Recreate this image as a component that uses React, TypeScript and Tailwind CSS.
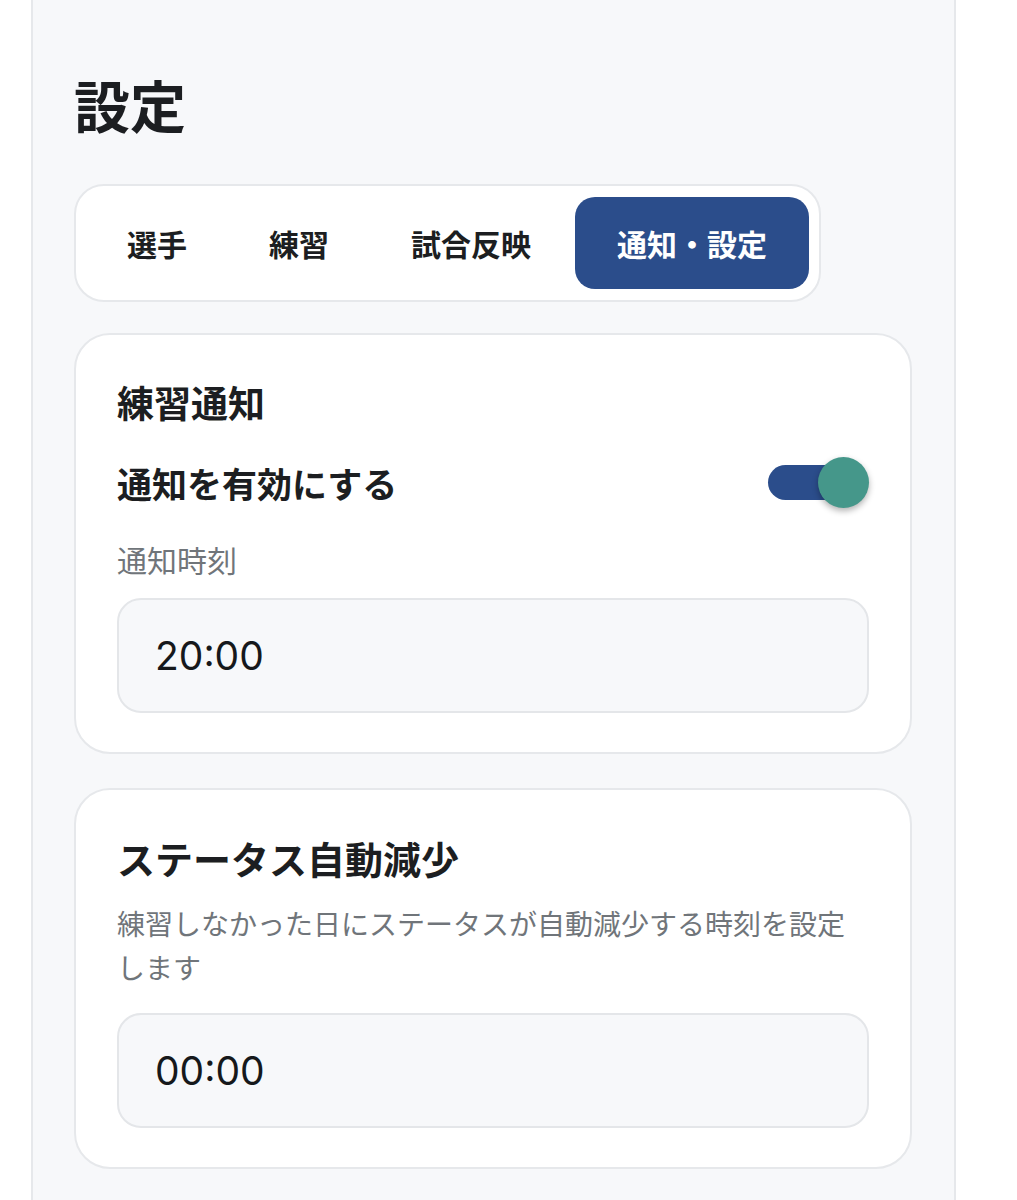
import React from "react";

const jp = "font-['Noto_Sans_CJK_JP','Noto_Sans',sans-serif]";

const tabs = ["選手", "練習", "試合反映", "通知・設定"];

const TimeField = ({ value }: { value: string }) => (
  <input
    readOnly
    value={value}
    className="block h-[115px] w-full rounded-[24px] border-2 border-[#e4e6e9] bg-[#f7f8fa] pl-[36px] font-['Inter',sans-serif] text-[39px] text-[#16181b] outline-none"
  />
);

const Toggle = () => (
  <div className="relative h-[51px] w-[101px]">
    <div className="absolute left-0 top-[8px] h-[35px] w-[76px] rounded-full bg-[#2b4d8b]" />
    <div className="absolute right-0 top-0 h-[51px] w-[51px] rounded-full bg-[#45978a] shadow-[0_3px_6px_rgba(0,0,0,0.3)]" />
  </div>
);

export default function App() {
  const active = "通知・設定";

  return (
    <div className={`min-h-[1200px] bg-white ${jp}`}>
      <div className="ml-[31px] min-h-[1200px] w-[925px] border-x-2 border-[#e6e8eb] bg-[#f7f8fa] pl-[41px] pr-[42px] pt-[70px]">
        <h1 className="text-[56px] font-bold leading-[68px] text-[#1c1e21]">設定</h1>

        <div className="mt-[46px] inline-flex rounded-[30px] border-2 border-[#e6e8eb] bg-white px-[10px] py-[11px]">
          {tabs.map((t) => (
            <div
              key={t}
              className={
                t === active
                  ? "ml-[3px] rounded-[20px] bg-[#2b4d8b] px-[42px] py-[26px] text-[30px] font-bold leading-[40px] text-white"
                  : "rounded-[20px] px-[41px] py-[26px] text-[30px] font-bold leading-[40px] text-[#1c1e21]"
              }
            >
              {t}
            </div>
          ))}
        </div>

        <div className="mt-[31px] w-[838px] rounded-[36px] border-2 border-[#e6e8eb] bg-white px-[41px] pb-[39px] pt-[43px]">
          <h2 className="text-[37px] font-bold leading-[48px] text-[#1c1e21]">練習通知</h2>
          <div className="mt-[31px] flex items-center justify-between">
            <span className="text-[35px] font-bold leading-[48px] text-[#1c1e21]">通知を有効にする</span>
            <Toggle />
          </div>
          <div className="mt-[31px] text-[30px] leading-[40px] text-[#70757a]">通知時刻</div>
          <div className="mt-[19px]">
            <TimeField value="20:00" />
          </div>
        </div>

        <div className="mt-[34px] w-[838px] rounded-[36px] border-2 border-[#e6e8eb] bg-white px-[41px] pb-[39px] pt-[44px]">
          <h2 className="text-[38px] font-bold leading-[48px] text-[#1c1e21]">ステータス自動減少</h2>
          <p className="mt-[19px] text-[28px] leading-[44px] text-[#70757a]">
            練習しなかった日にステータスが自動減少する時刻を設定します
          </p>
          <div className="mt-[24px]">
            <TimeField value="00:00" />
          </div>
        </div>
      </div>
    </div>
  );
}
